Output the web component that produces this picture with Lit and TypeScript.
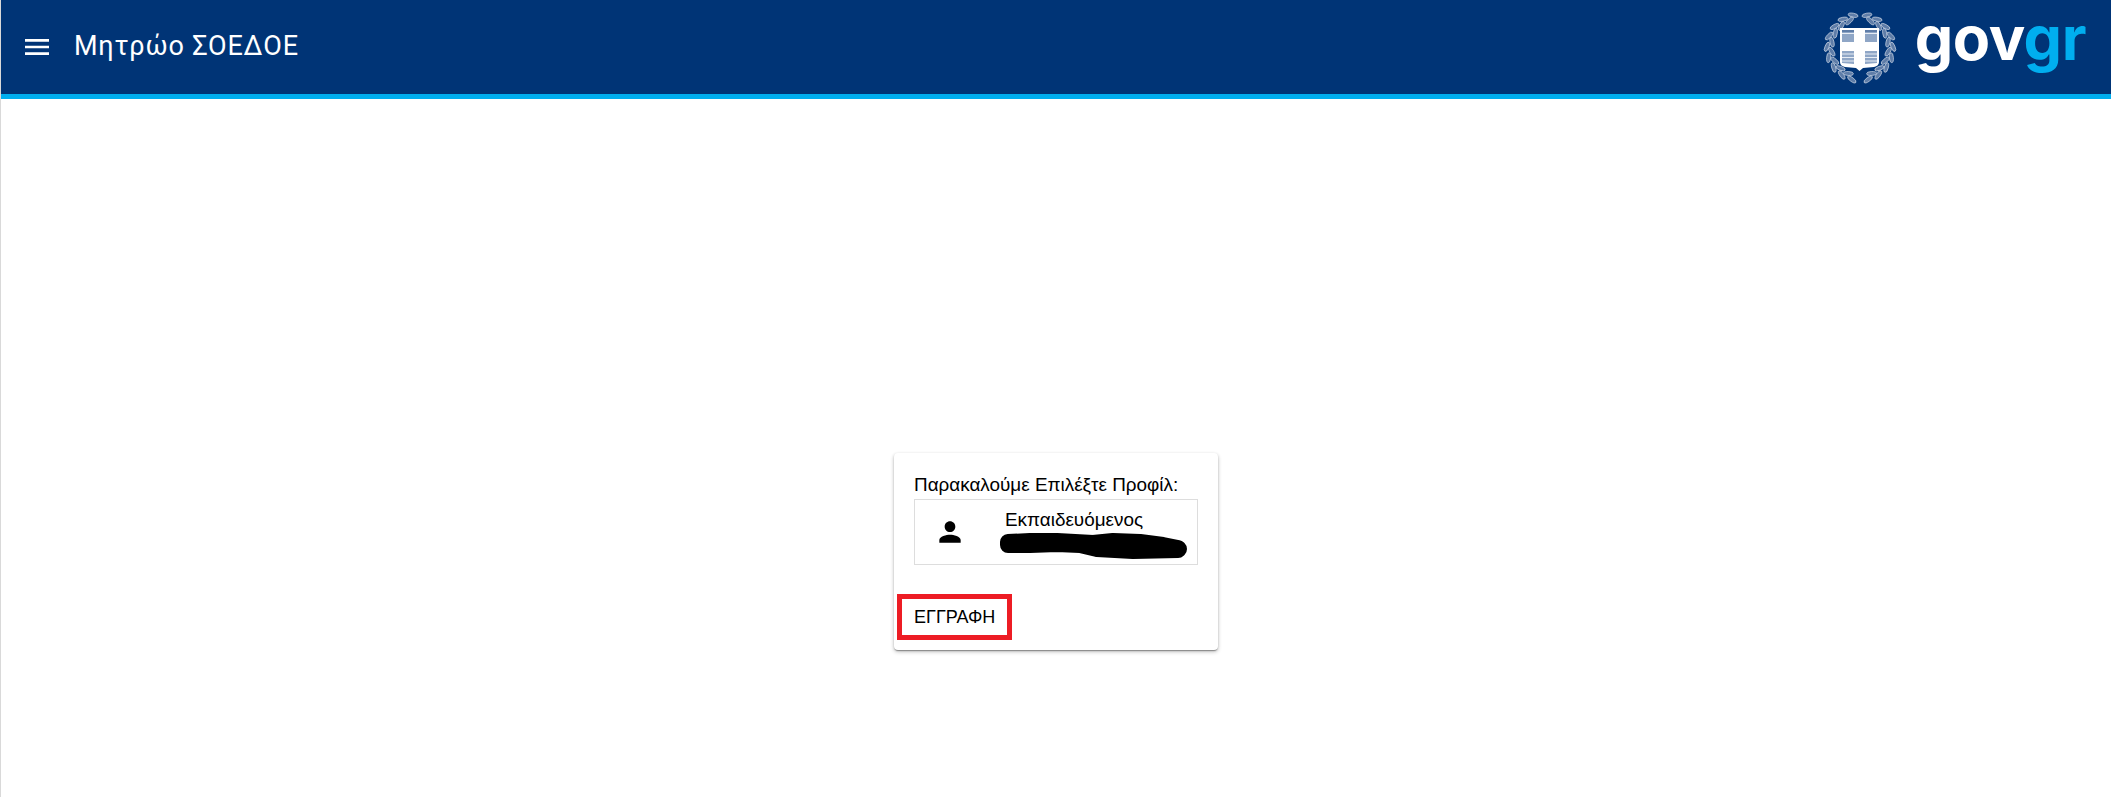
import { LitElement, html, css, svg } from "lit";
import { customElement } from "lit/decorators.js";

function leaves() {
  const out = [];
  for (const side of [-1, 1]) {
    for (let i = 0; i < 17; i++) {
      const deg = 12 + i * 9.6;
      const a = (deg * Math.PI) / 180;
      const r = i % 2 ? 28.5 : 33;
      const x = 37 + side * Math.sin(a) * r;
      const y = 37.5 - Math.cos(a) * r;
      const rot = side * (deg + (i % 2 ? 22 : -22));
      out.push(svg`<ellipse cx=${x.toFixed(1)} cy=${y.toFixed(1)} rx="5" ry="2" transform="rotate(${rot.toFixed(0)} ${x.toFixed(1)} ${y.toFixed(1)})" fill="#5f7da8" stroke="#dfe6f0" stroke-width=".6" />`);
    }
  }
  return out;
}

@customElement("app-root")
export class AppRoot extends LitElement {
  static styles = css`
    :host { display: block; height: 797px; background: #fff; border-left: 1px solid #d9d9d9; box-sizing: border-box; overflow: hidden; font-family: "Liberation Sans", Arial, sans-serif; color: #000; }
    .bar { height: 99px; box-sizing: border-box; background: #003476; border-bottom: 5px solid #00aeef; display: flex; align-items: center; padding: 0 25px 0 20px; }
    .menu { width: 32px; height: 32px; display: block; fill: #fff; flex: none; }
    .title { margin: -2px 0 0 21px; font-family: Roboto, sans-serif; font-size: 27px; font-weight: 400; letter-spacing: 0.8px; color: #fff; }
    .logo { margin-left: auto; display: flex; align-items: center; gap: 17px; }
    .emblem { width: 75px; height: 75px; display: block; }
    .gov { font-family: Inter, sans-serif; font-weight: 700; font-size: 61px; line-height: 80px; letter-spacing: -0.5px; color: #fff; margin-top: -18px; }
    .gov span { color: #00aeef; }
    .main { display: flex; justify-content: center; padding-top: 354px; }
    .card { width: 324px; height: 197px; box-sizing: border-box; background: #fff; border-radius: 4px; box-shadow: 0 2px 1px -1px rgba(0,0,0,.2), 0 1px 1px rgba(0,0,0,.14), 0 1px 3px rgba(0,0,0,.12), 0 2px 4px rgba(0,0,0,.2); padding: 21px 20px 0; font-size: 18.9px; line-height: 22px; }
    .profile { margin-top: 3px; height: 66px; box-sizing: border-box; border: 1px solid #ddd; display: flex; align-items: center; padding-left: 19px; }
    .person { width: 32px; height: 32px; fill: #000; flex: none; }
    .who { margin-left: 39px; align-self: flex-start; margin-top: 9px; position: relative; white-space: nowrap; }
    .scribble { position: absolute; left: -5px; top: 24px; width: 188px; height: 27px; display: block; overflow: visible; }
    .register { display: inline-block; margin: 29px 0 0 -17px; border: 5px solid #ed1c24; padding: 0 12px; height: 46px; line-height: 36px; box-sizing: border-box; font-size: 18px; }
  `;

  render() {
    return html`
      <header class="bar">
        <svg class="menu" viewBox="0 0 24 24"><path d="M3 18h18v-2H3v2zm0-5h18v-2H3v2zm0-7v2h18V6H3z" /></svg>
        <div class="title">Μητρώο ΣΟΕΔΟΕ</div>
        <div class="logo">
          <svg class="emblem" viewBox="0 0 75 75">
            ${leaves()}
            <path d="M17 18H56V52Q56 56 51 57L40 58 36.5 61 33 58 22 57Q17 56 17 52Z" fill="#fff" />
            <path d="M19 20H31V32H19ZM42 20H54V32H42ZM19 41H31V54L19 53ZM42 41H54V53L42 54Z" fill="#8fa6c6" />
            <path d="M19 21H31M42 21H54" stroke="#5f7da8" stroke-width="2" />
            <path d="M19 23.5H31M42 23.5H54M19 44H31M42 44H54M19 47.5H31M42 47.5H54M19 51H31M42 51H54" stroke="#e6ecf4" stroke-width="1" />
          </svg>
          <div class="gov">gov<span>gr</span></div>
        </div>
      </header>
      <main class="main">
        <section class="card">
          <div>Παρακαλούμε Επιλέξτε Προφίλ:</div>
          <div class="profile">
            <svg class="person" viewBox="0 0 24 24"><path d="M12 12c2.21 0 4-1.79 4-4s-1.79-4-4-4-4 1.79-4 4 1.79 4 4 4zm0 2c-2.67 0-8 1.34-8 4v2h16v-2c0-2.66-5.33-4-8-4z" /></svg>
            <div class="who">Εκπαιδευόμενος
              <svg class="scribble" viewBox="0 0 188 27"><path d="M8 9 30 8 57 8 93 10 113 8 140 9 163 12 178 15 179 16 178 17 133 18 97 16 80 12 57 11 30 12 8 12Z" fill="#000" stroke="#000" stroke-width="16" stroke-linejoin="round" /></svg>
            </div>
          </div>
          <div class="register">ΕΓΓΡΑΦΗ</div>
        </section>
      </main>
    `;
  }
}
